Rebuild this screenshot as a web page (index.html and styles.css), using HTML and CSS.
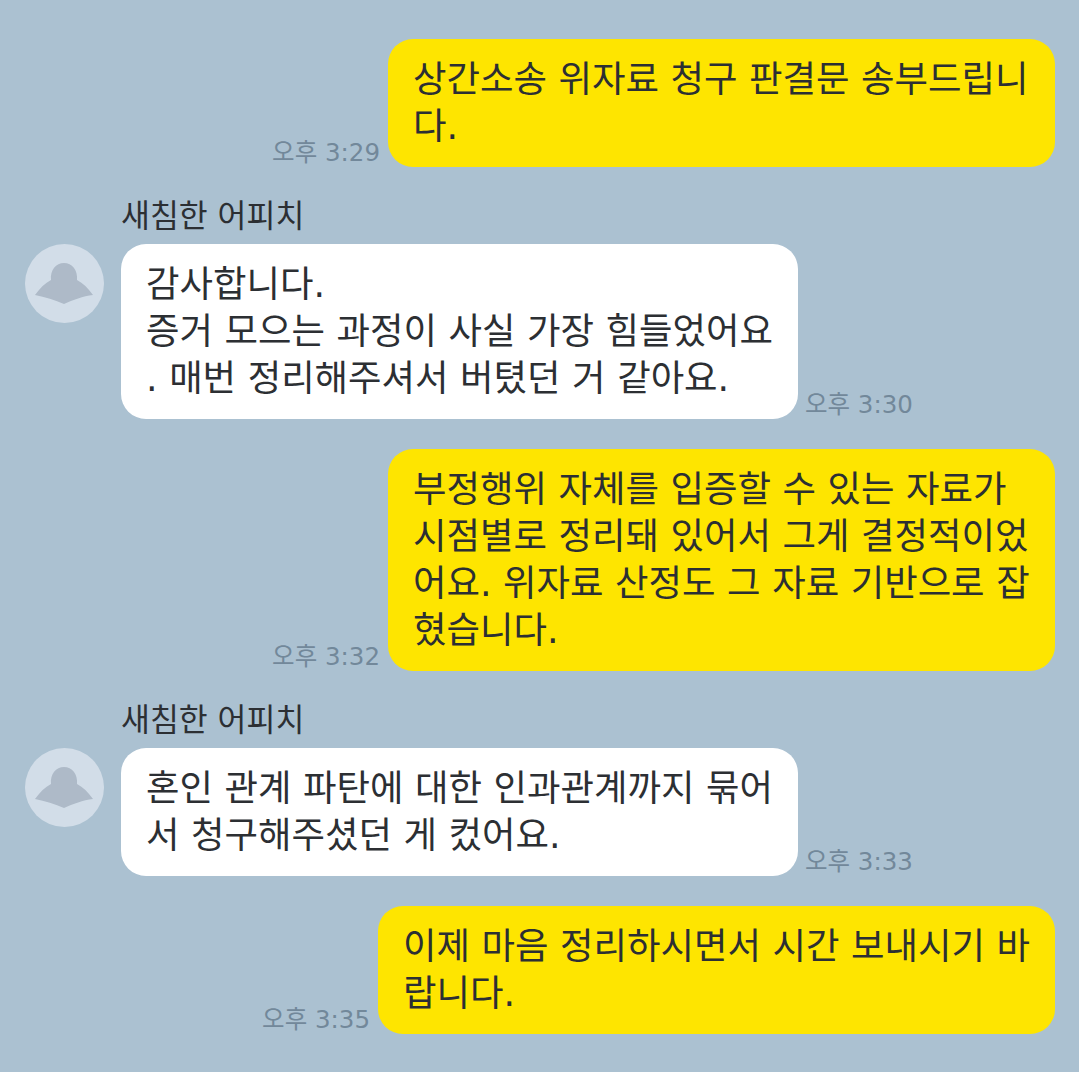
FILE: index.html
```html
<!DOCTYPE html>
<html lang="ko">
<head>
  <meta charset="UTF-8" />
  <title>Chat</title>
  <link rel="stylesheet" href="styles.css">
</head>
<body>
  <div class="chat">
    <div class="row me">
      <span class="time">오후 3:29</span>
      <div class="bubble yellow">상간소송 위자료 청구 판결문 송부드립니<br>다.</div>
    </div>
    <div class="row other">
      <div class="avatar">
        <svg viewBox="0 0 79 79" width="79" height="79"><path d="M10 51 C15 44 20 39 26 36 C25 26 31 19 39 19 C47 19 53 26 52 36 C58 39 63 44 68 51 C58 52 48 56 39 60 C30 56 20 53 10 51 Z" fill="#aebac8"/></svg>
      </div>
      <div class="body">
        <div class="name">새침한 어피치</div>
        <div class="line">
          <div class="bubble white">감사합니다.<br>증거 모으는 과정이 사실 가장 힘들었어요<br>. 매번 정리해주셔서 버텼던 거 같아요.</div>
          <span class="time">오후 3:30</span>
        </div>
      </div>
    </div>
    <div class="row me">
      <span class="time">오후 3:32</span>
      <div class="bubble yellow">부정행위 자체를 입증할 수 있는 자료가<br>시점별로 정리돼 있어서 그게 결정적이었<br>어요. 위자료 산정도 그 자료 기반으로 잡<br>혔습니다.</div>
    </div>
    <div class="row other">
      <div class="avatar">
        <svg viewBox="0 0 79 79" width="79" height="79"><path d="M10 51 C15 44 20 39 26 36 C25 26 31 19 39 19 C47 19 53 26 52 36 C58 39 63 44 68 51 C58 52 48 56 39 60 C30 56 20 53 10 51 Z" fill="#aebac8"/></svg>
      </div>
      <div class="body">
        <div class="name">새침한 어피치</div>
        <div class="line">
          <div class="bubble white">혼인 관계 파탄에 대한 인과관계까지 묶어<br>서 청구해주셨던 게 컸어요.</div>
          <span class="time">오후 3:33</span>
        </div>
      </div>
    </div>
    <div class="row me">
      <span class="time">오후 3:35</span>
      <div class="bubble yellow wide">이제 마음 정리하시면서 시간 보내시기 바<br>랍니다.</div>
    </div>
  </div>
</body>
</html>
```
FILE: styles.css
```css
:root {
  --chat-bg: #abc1d1;
  --kakao: #fee500;
  --text-dark: #2c2f33;
  --time: #72889a;
}

body {
  margin: 0;
  background: var(--chat-bg);
  font-family: "DejaVu Sans", "Noto Sans CJK KR", sans-serif;
  color: var(--text-dark);
}

.chat {
  display: flex;
  flex-direction: column;
  gap: 30px;
  padding: 39px 24px 38px 25px;
}

.row {
  display: flex;
}

.row.me {
  justify-content: flex-end;
  align-items: flex-end;
  gap: 8px;
}

.bubble {
  box-sizing: border-box;
  padding: 17px 25px;
  border-radius: 25px;
  font-size: 36.4px;
  line-height: 47px;
  white-space: nowrap;
}

.yellow {
  width: 667px;
  background: var(--kakao);
}

.yellow.wide {
  width: 677px;
}

.white {
  width: 677px;
  background: #fff;
}

.time {
  font-size: 24.5px;
  line-height: 26px;
  padding-bottom: 1px;
  color: var(--time);
  white-space: nowrap;
}

.avatar {
  width: 79px;
  height: 79px;
  margin-top: 47px;
  margin-right: 17px;
  border-radius: 50%;
  background: #d2dde8;
  overflow: hidden;
}

.avatar svg {
  display: block;
}

.name {
  font-size: 31.4px;
  line-height: 36px;
  margin-top: 1px;
  margin-bottom: 10px;
}

.line {
  display: flex;
  align-items: flex-end;
  gap: 7px;
}
```
